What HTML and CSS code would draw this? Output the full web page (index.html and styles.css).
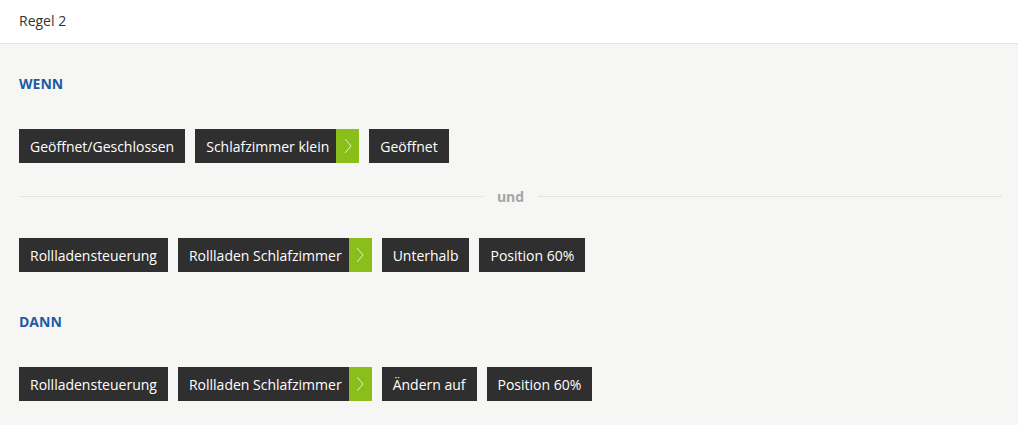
FILE: index.html
```html
<!DOCTYPE html>
<html>
<head>
<meta charset="utf-8">
<link rel="stylesheet" href="styles.css">
</head>
<body>
<div class="header">Regel 2</div>
<div class="main">
  <div class="label">WENN</div>
  <div class="row">
    <span class="chip">Geöffnet/Geschlossen</span>
    <span class="chip chip-arrow"><span class="chip-text">Schlafzimmer klein</span><span class="arrow"><svg width="8" height="16" viewBox="0 0 8 16"><path d="M1 1 L7 8 L1 15" fill="none" stroke="#fff" stroke-width="1" opacity="0.75"/></svg></span></span>
    <span class="chip">Geöffnet</span>
  </div>
  <div class="divider"><span class="line"></span><span class="und">und</span><span class="line"></span></div>
  <div class="row">
    <span class="chip">Rollladensteuerung</span>
    <span class="chip chip-arrow"><span class="chip-text">Rollladen Schlafzimmer</span><span class="arrow"><svg width="8" height="16" viewBox="0 0 8 16"><path d="M1 1 L7 8 L1 15" fill="none" stroke="#fff" stroke-width="1" opacity="0.75"/></svg></span></span>
    <span class="chip">Unterhalb</span>
    <span class="chip">Position 60%</span>
  </div>
  <div class="label label-dann">DANN</div>
  <div class="row">
    <span class="chip">Rollladensteuerung</span>
    <span class="chip chip-arrow"><span class="chip-text">Rollladen Schlafzimmer</span><span class="arrow"><svg width="8" height="16" viewBox="0 0 8 16"><path d="M1 1 L7 8 L1 15" fill="none" stroke="#fff" stroke-width="1" opacity="0.75"/></svg></span></span>
    <span class="chip">Ändern auf</span>
    <span class="chip">Position 60%</span>
  </div>
</div>
</body>
</html>
```

FILE: styles.css
```css
html, body {
  margin: 0;
  padding: 0;
}
body {
  font-family: "Open Sans", "Liberation Sans", sans-serif;
  background: #f6f6f5;
  width: 1018px;
  height: 425px;
  overflow: hidden;
}
.header {
  background: #ffffff;
  height: 44px;
  box-sizing: border-box;
  border-bottom: 1px solid #e3e3e3;
  padding: 0 19px;
  font-size: 14px;
  line-height: 42px;
  color: #333;
}
.main {
  padding: 31px 16px 0 19px;
}
.label {
  font-size: 14px;
  font-weight: 700;
  color: #1f5aa4;
  line-height: 18px;
  height: 18px;
}
.label-dann {
  margin-top: 41px;
}
.row {
  display: flex;
  gap: 10px;
  margin-top: 36px;
}
.chip {
  display: flex;
  align-items: center;
  background: #2f2f2f;
  color: #fff;
  font-size: 14px;
  height: 34px;
  padding: 0 11px;
  white-space: nowrap;
}
.chip-arrow {
  padding: 0;
}
.chip-text {
  padding: 0 7px 0 11px;
}
.arrow {
  width: 23px;
  height: 34px;
  background: #8abe1a;
  display: flex;
  align-items: center;
  justify-content: center;
}
.divider {
  display: flex;
  align-items: center;
  gap: 14px;
  height: 32px;
  margin-top: 17px;
  margin-bottom: -10px;
}
.line {
  flex: 1;
  height: 1px;
  background: #e2e2e2;
}
.und {
  font-size: 14px;
  font-weight: 700;
  color: #a5a5a5;
}
```
